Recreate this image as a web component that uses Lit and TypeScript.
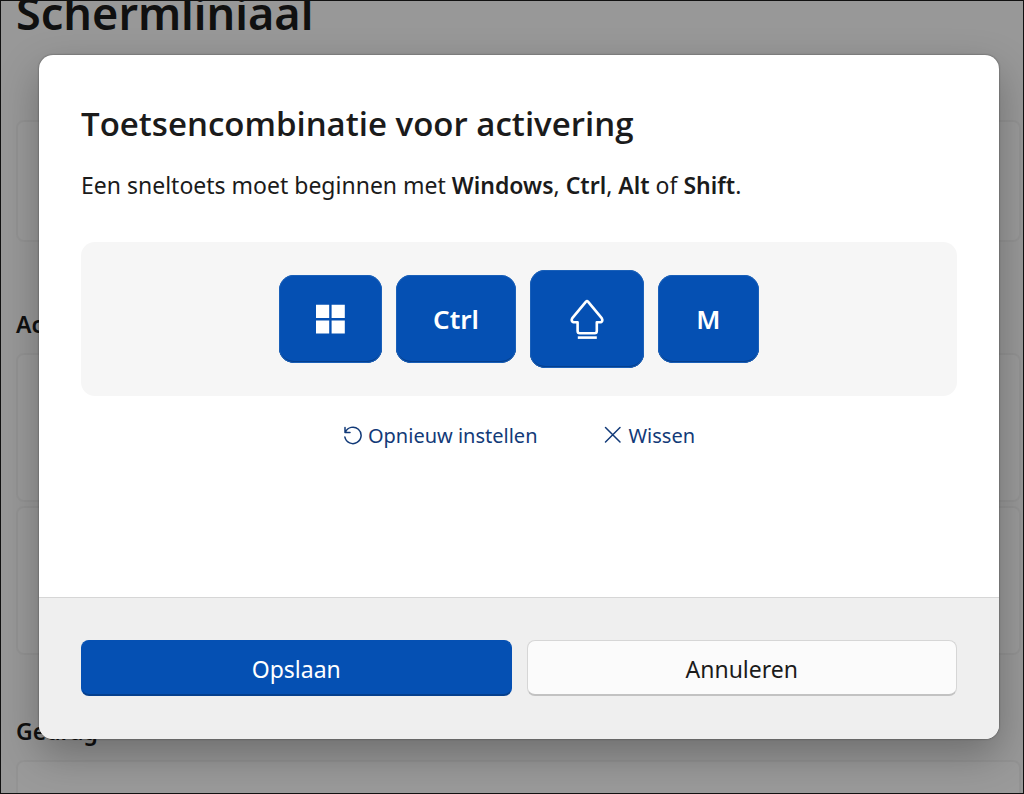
import { LitElement, html, css } from "lit";
import { customElement } from "lit/decorators.js";

const windowsIcon = html`<svg class="glyph-win" viewBox="0 0 29 30" role="img" aria-label="Windows">
  <path fill="currentColor" d="M0 0.800H13.200V14H0ZM15.600 0.800H28.800V14H15.600ZM0 16.400H13.200V29.600H0ZM15.600 16.400H28.800V29.600H15.600Z" />
</svg>`;

const shiftIcon = html`<svg class="glyph-shift" viewBox="0 0 40 46" role="img" aria-label="Shift">
  <g fill="none" stroke="currentColor" stroke-width="2.600" stroke-linejoin="round" stroke-linecap="round">
    <path d="M18.800 5.800Q20 4.600 21.200 5.800L34.700 22.200Q36.400 25.200 33.800 26.200H29.800V35Q29.800 37.200 27.600 37.200H12.800Q10.600 37.200 10.600 35V26.200H6.400Q3.600 25.200 5.300 22.200Z" />
    <path d="M10.800 41.600H29.800" stroke-linecap="butt" />
  </g>
</svg>`;

const resetIcon = html`<svg class="link-icon" viewBox="0 0 20 20" aria-hidden="true">
  <path fill="none" stroke="currentColor" stroke-width="1.500" stroke-linecap="round" stroke-linejoin="round"
    d="M2 1.500V6.500H7M2.400 6.100A8.200 8.200 0 1 1 1.900 11.100" />
</svg>`;

const clearIcon = html`<svg class="link-icon" viewBox="0 0 20 20" aria-hidden="true">
  <path fill="none" stroke="currentColor" stroke-width="1.500" stroke-linecap="round" d="M1.500 1.500L16 16M16 1.500L1.500 16" />
</svg>`;

@customElement("settings-page")
class SettingsPage extends LitElement {
  static styles = css`
    :host {
      display: block;
      padding: 0 2px 0 15px;
      color: #1b1b1b;
    }
    .title {
      margin: 0 0 96px;
      font-size: 45px;
      line-height: 23px;
      font-weight: 600;
    }
    .group {
      margin: 67px 0 14px;
      font-size: 23px;
      line-height: 30px;
      font-weight: 600;
    }
    .group.next {
      margin-top: 61px;
    }
    .card {
      box-sizing: border-box;
      border: 2px solid #eeeeee;
      border-radius: 8px;
      background: #f9f9f9;
      height: 149px;
      margin-bottom: 4px;
    }
    .card.short {
      height: 122px;
    }
  `;

  render() {
    return html`
      <h1 class="title">Schermliniaal</h1>
      <div class="card short"></div>
      <h2 class="group">Activering</h2>
      <div class="card"></div>
      <div class="card"></div>
      <h2 class="group next">Gedrag</h2>
      <div class="card"></div>
    `;
  }
}

@customElement("shortcut-dialog")
class ShortcutDialog extends LitElement {
  static styles = css`
    :host {
      display: flex;
      flex-direction: column;
      border-radius: 14px;
      overflow: hidden;
      background: #fff;
      color: #1b1b1b;
      box-shadow: 0 0 2px rgba(0, 0, 0, 0.5), 0 16px 40px rgba(0, 0, 0, 0.28);
    }
    .body {
      flex: 1;
      padding: 43px 42px;
    }
    .title {
      margin: 0;
      font-family: "Open Sans", "Noto Sans", sans-serif;
      font-size: 33px;
      line-height: 52px;
      font-weight: 600;
    }
    .hint {
      margin: 18px 0 40px;
      font-size: 23px;
      line-height: 34px;
    }
    .hint b {
      font-weight: 600;
    }
    .keys {
      display: flex;
      align-items: center;
      justify-content: center;
      gap: 14px;
      padding: 28px;
      border-radius: 14px;
      background: #f6f6f6;
    }
    .key {
      display: flex;
      align-items: center;
      justify-content: center;
      box-sizing: border-box;
      min-width: 101px;
      padding: 26px 37px;
      border-radius: 15px;
      background: #0550b3;
      box-shadow: inset 0 0 0 1px #1a60b9, inset 0 -2px 0 #053f8d;
      color: #fff;
      font-family: inherit;
      font-size: 26px;
      line-height: 36px;
      font-weight: 600;
    }
    .glyph-win {
      width: 29px;
      height: 36px;
    }
    .glyph-shift {
      width: 40px;
      height: 46px;
    }
    .links {
      display: flex;
      justify-content: center;
      gap: 66px;
      margin-top: 25px;
    }
    .link {
      display: flex;
      align-items: center;
      gap: 5px;
      padding: 0;
      border: 0;
      background: none;
      color: #123a78;
      font: inherit;
      font-size: 20px;
      line-height: 30px;
    }
    .link-icon {
      width: 20px;
      height: 20px;
    }
    .footer {
      display: grid;
      grid-template-columns: 1fr 1fr;
      gap: 15px;
      padding: 42px 42px 43px;
      border-top: 1px solid #d6d6d6;
      background: #efefef;
    }
    .button {
      height: 56px;
      padding: 2px 0 0;
      border: 1px solid #d6d6d6;
      border-bottom: 2px solid #c2c2c2;
      border-radius: 8px;
      background: #fbfbfb;
      color: #1b1b1b;
      font: inherit;
      font-size: 23px;
    }
    .button.primary {
      border-color: #0550b3;
      border-bottom-color: #053f8d;
      background: #0550b3;
      color: #fff;
    }
  `;

  render() {
    return html`
      <div class="body">
        <h2 class="title">Toetsencombinatie voor activering</h2>
        <p class="hint">Een sneltoets moet beginnen met <b>Windows</b>, <b>Ctrl</b>, <b>Alt</b> of <b>Shift</b>.</p>
        <div class="keys">
          <kbd class="key">${windowsIcon}</kbd>
          <kbd class="key">Ctrl</kbd>
          <kbd class="key">${shiftIcon}</kbd>
          <kbd class="key">M</kbd>
        </div>
        <div class="links">
          <button class="link" type="button">${resetIcon}Opnieuw instellen</button>
          <button class="link" type="button">${clearIcon}Wissen</button>
        </div>
      </div>
      <div class="footer">
        <button class="button primary" type="button">Opslaan</button>
        <button class="button" type="button">Annuleren</button>
      </div>
    `;
  }
}

@customElement("app-root")
class AppRoot extends LitElement {
  static styles = css`
    :host {
      display: block;
      position: relative;
      box-sizing: border-box;
      height: 100vh;
      overflow: hidden;
      border: 1px solid #111;
      background: #f5f5f5;
      font-family: "Noto Sans", "Open Sans", sans-serif;
    }
    .overlay {
      position: absolute;
      inset: 0;
      display: grid;
      padding: 54px 24px 54px 38px;
      background: rgba(0, 0, 0, 0.38);
    }
  `;

  render() {
    return html`
      <settings-page></settings-page>
      <div class="overlay">
        <shortcut-dialog role="dialog" aria-modal="true" aria-label="Toetsencombinatie voor activering"></shortcut-dialog>
      </div>
    `;
  }
}
